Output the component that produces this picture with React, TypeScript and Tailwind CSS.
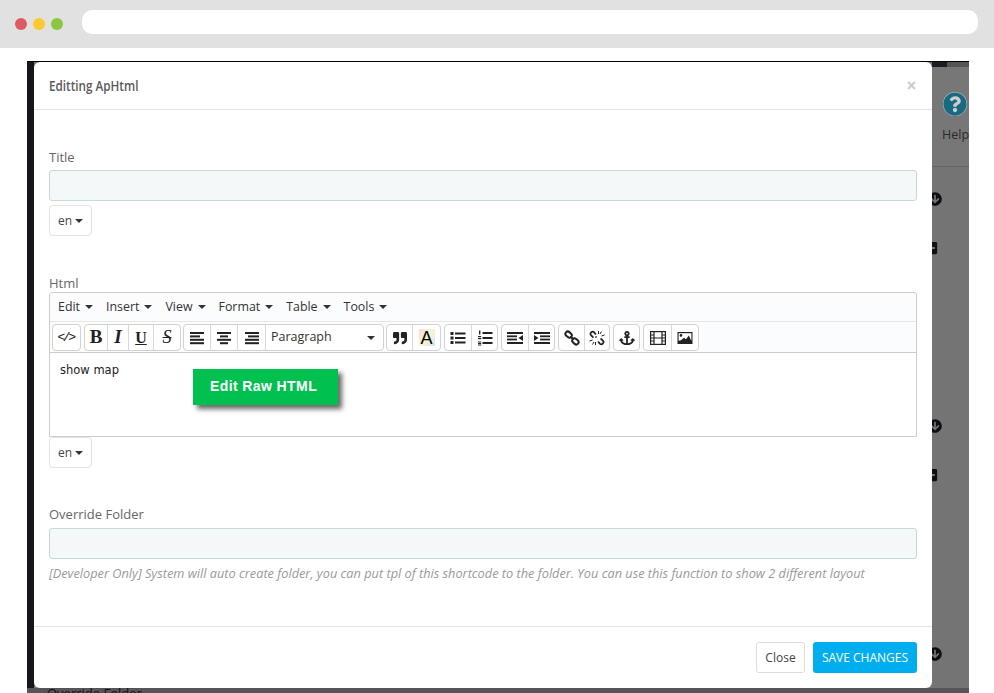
import React from 'react';
import { FaAnchor, FaArrowCircleDown, FaPlusSquare, FaQuoteRight, FaQuestionCircle } from 'react-icons/fa';

const Caret = ({ className = 'border-t-[#333]' }: { className?: string }) => (
  <span className={`inline-block w-0 h-0 border-x-[4px] border-x-transparent border-t-[4px] ${className}`} />
);

const Lines = ({ rows }: { rows: [number, number][] }) => (
  <svg width="16" height="14" viewBox="0 0 16 14" fill="#222">
    {rows.map(([x, w], i) => (
      <rect key={i} x={x} y={1 + i * 3.4} width={w} height="2" />
    ))}
  </svg>
);

const BulletList = () => (
  <svg width="16" height="14" viewBox="0 0 16 14" fill="#222">
    <rect x="0.5" y="1" width="3" height="3" />
    <rect x="0.5" y="5.5" width="3" height="3" />
    <rect x="0.5" y="10" width="3" height="3" />
    <rect x="5" y="1.5" width="10.5" height="2" />
    <rect x="5" y="6" width="10.5" height="2" />
    <rect x="5" y="10.5" width="10.5" height="2" />
  </svg>
);

const NumberList = () => (
  <svg width="16" height="16" viewBox="0 0 16 16" fill="#222">
    <rect x="2" y="0.5" width="1.4" height="4" />
    <rect x="1" y="6" width="3.2" height="1.2" />
    <rect x="1" y="8" width="3.2" height="1.2" />
    <rect x="1" y="11.5" width="3.2" height="1" />
    <rect x="1" y="13" width="3.2" height="1" />
    <rect x="1" y="14.5" width="3.2" height="1" />
    <rect x="5.5" y="2" width="10" height="2" />
    <rect x="5.5" y="7" width="10" height="2" />
    <rect x="5.5" y="12" width="10" height="2" />
  </svg>
);

const Indent = ({ flip }: { flip?: boolean }) => (
  <svg width="16" height="14" viewBox="0 0 16 14" fill="#222" className={flip ? '-scale-x-100' : ''}>
    <rect x="0" y="1" width="16" height="2" />
    <rect x="6" y="4.4" width="10" height="1.8" />
    <rect x="6" y="7.6" width="10" height="1.8" />
    <rect x="0" y="11" width="16" height="2" />
    <path d="M0 4l4.5 3L0 10z" />
  </svg>
);

const LinkIcon = () => (
  <svg width="16" height="16" viewBox="0 0 16 16" fill="none" stroke="#222" strokeWidth="2">
    <rect x="-3.4" y="-2.4" width="6.8" height="4.8" rx="2.4" transform="translate(4.6 4.6) rotate(40)" />
    <rect x="-3.4" y="-2.4" width="6.8" height="4.8" rx="2.4" transform="translate(11.4 11.4) rotate(40)" />
    <path d="M6.5 6.5l3 3" />
  </svg>
);

const UnlinkIcon = () => (
  <svg width="16" height="16" viewBox="0 0 16 16" fill="none" stroke="#222" strokeWidth="1.7">
    <path d="M7 4.5L5.2 2.4a2.1 2.1 0 0 0-3 3l2.2 2.2M9 11.5l1.8 2.1a2.1 2.1 0 0 0 3-3l-2.2-2.2M6.5 6.5l1 1" />
    <path strokeWidth="1" d="M9.5 1v3M12.5 1.5l-1.5 2.5M15.5 5l-3 1M.5 11l3-1M3.5 14.5l1.5-2.5M6.5 15v-3" />
  </svg>
);

const FilmIcon = () => (
  <svg width="16" height="14" viewBox="0 0 16 14" fill="none" stroke="#222" strokeWidth="1.2">
    <rect x="0.6" y="0.6" width="14.8" height="12.8" />
    <path d="M4 .6v12.8M12 .6v12.8M.6 4h3.4M.6 7h3.4M.6 10h3.4M12 4h3.4M12 7h3.4M12 10h3.4M4 7h8" />
  </svg>
);

const ImageIcon = () => (
  <svg width="16" height="14" viewBox="0 0 16 14">
    <rect x="0.5" y="1" width="15" height="12" fill="#222" />
    <rect x="1.6" y="2.2" width="12.8" height="7.4" fill="#fff" />
    <circle cx="4" cy="4.4" r="1.3" fill="#222" />
    <path d="M3 10l4-3.2 2 1.4 2.8-3.6 2.6 5.4z" fill="#222" />
  </svg>
);

// one joined button in a toolbar group, width comes from the reference
const Btn = ({ w, children }: { w: string; children: React.ReactNode }) => (
  <div className={`${w} h-full flex items-center justify-center border-r border-[#d9d9d9] last:border-r-0`}>
    {children}
  </div>
);

const Group = ({ className = '', children }: { className?: string; children: React.ReactNode }) => (
  <div className={`h-[27px] flex border border-[#d2d2d2] rounded-[4px] bg-white ${className}`}>{children}</div>
);

const menus = ['Edit', 'Insert', 'View', 'Format', 'Table', 'Tools'];

const LangButton = () => (
  <div className="w-[43px] h-[31px] border border-[#e2e2e2] rounded-[4px] flex items-center justify-center gap-[3px] text-[12px] text-[#444]">
    en <Caret />
  </div>
);

const TextField = () => (
  <div className="h-[31px] bg-[#f4f8f9] border border-[#c3d9dc] rounded-[3px]" />
);

const Toolbar = () => (
  <div className="h-[31px] flex items-start gap-[3px] pl-[2px] pt-[2px] border-b border-[#ccc] bg-[#fbfcfd]">
    <Group>
      <Btn w="w-[27px]">
        <span className="font-['Liberation_Mono',monospace] text-[13px] tracking-[-2.5px] pr-[2px] text-[#222]">&lt;/&gt;</span>
      </Btn>
    </Group>
    <Group>
      <Btn w="w-[23px]"><span className="font-['Liberation_Serif',serif] text-[19px] font-bold text-[#222]">B</span></Btn>
      <Btn w="w-[21px]"><span className="font-['Liberation_Serif',serif] text-[19px] font-bold italic text-[#222]">I</span></Btn>
      <Btn w="w-[25px]"><span className="font-['Liberation_Serif',serif] text-[16px] font-bold underline text-[#222]">U</span></Btn>
      <Btn w="w-[26px]"><span className="font-['Liberation_Serif',serif] text-[18px] line-through italic text-[#222]">S</span></Btn>
    </Group>
    <Group className="-ml-px">
      <Btn w="w-[27px]"><Lines rows={[[1, 14], [1, 10], [1, 14], [1, 14]]} /></Btn>
      <Btn w="w-[27px]"><Lines rows={[[1, 14], [4, 8], [1, 14], [4, 8]]} /></Btn>
      <Btn w="w-[28px]"><Lines rows={[[1, 14], [4, 11], [1, 14], [1, 14]]} /></Btn>
      <div className="w-[117px] flex items-center justify-between pl-[5px] pr-[8px] text-[12.5px] text-[#333]">
        Paragraph <Caret />
      </div>
    </Group>
    <Group className="-ml-px">
      <Btn w="w-[26px]"><FaQuoteRight className="text-[14px] text-[#222]" /></Btn>
      <Btn w="w-[27px]">
        <span className="w-[16px] h-[17px] flex items-center justify-center bg-[linear-gradient(135deg,#fbd5dc,#fbf6cc_50%,#cfe6fb)] text-[18px] font-['Liberation_Sans',sans-serif] text-black leading-none">A</span>
      </Btn>
    </Group>
    <Group>
      <Btn w="w-[27px]"><BulletList /></Btn>
      <Btn w="w-[25px]"><NumberList /></Btn>
    </Group>
    <Group>
      <Btn w="w-[27px]"><Indent flip /></Btn>
      <Btn w="w-[25px]"><Indent /></Btn>
    </Group>
    <Group>
      <Btn w="w-[26px]"><LinkIcon /></Btn>
      <Btn w="w-[24px]"><UnlinkIcon /></Btn>
    </Group>
    <Group>
      <Btn w="w-[25px]"><FaAnchor className="text-[16px] text-[#222]" /></Btn>
    </Group>
    <Group>
      <Btn w="w-[28px]"><FilmIcon /></Btn>
      <Btn w="w-[26px]"><ImageIcon /></Btn>
    </Group>
  </div>
);

const Editor = () => (
  <div className="relative h-[145px] border border-[#ccc] rounded-t-[3px] flex flex-col">
    <div className="h-[29px] shrink-0 flex items-center pl-[8px] gap-[13px] bg-[#fbfcfd] border-b border-[#e6e6e6] text-[12.4px] text-[#333] rounded-t-[3px]">
      {menus.map((m) => (
        <span key={m} className="flex items-center gap-[5px]">
          {m} <Caret />
        </span>
      ))}
    </div>
    <Toolbar />
    <div className="flex-1 pl-[10px] pt-[9px] text-[11.5px] leading-[16px] text-[#222] font-['DejaVu_Sans',sans-serif]">show map</div>
    <div className="absolute left-[143px] top-[76px] w-[145px] h-[36px] bg-[#00c04f] shadow-[4px_4px_5px_#666] flex items-center pl-[17px] pb-[2px] text-[14px] tracking-[0.4px] font-bold text-white font-['Liberation_Sans',sans-serif]">
      Edit Raw HTML
    </div>
  </div>
);

const Modal = () => (
  <div className="relative z-10 w-[898px] h-[626px] bg-white rounded-[6px] flex flex-col">
    <div className="h-[48px] shrink-0 border-b border-[#e5e5e5] flex items-center justify-between pl-[15px] pr-[16px]">
      <span className="origin-left scale-x-[0.78] whitespace-nowrap text-[15px] font-semibold text-[#5a5a5a]">Editting ApHtml</span>
      <span className="text-[16px] leading-none font-bold text-[#c9c9c9] font-['Liberation_Sans',sans-serif]">×</span>
    </div>
    <div className="flex-1 px-[15px] text-[13px] text-[#666]">
      <div className="mt-[38px] h-[18px] leading-[18px]">Title</div>
      <div className="mt-[4px]"><TextField /></div>
      <div className="mt-[4px]"><LangButton /></div>
      <div className="mt-[38px] h-[18px] leading-[18px]">Html</div>
      <Editor />
      <LangButton />
      <div className="mt-[37px] h-[18px] leading-[18px]">Override Folder</div>
      <div className="mt-[5px]"><TextField /></div>
      <div className="mt-[5px] text-[12.75px] leading-[18px] italic text-[#9a9a9a] whitespace-nowrap">
        [Developer Only] System will auto create folder, you can put tpl of this shortcode to the folder. You can use this function to show 2 different layout
      </div>
    </div>
    <div className="h-[62px] shrink-0 border-t border-[#e5e5e5] flex items-start justify-end gap-[8px] pt-[15px] pr-[15px]">
      <div className="w-[49px] h-[31px] border border-[#ddd] rounded-[3px] flex items-center justify-center text-[12px] text-[#444]">Close</div>
      <div className="w-[104px] h-[31px] bg-[#00aeef] rounded-[3px] flex items-center justify-center text-[12px] text-white">SAVE CHANGES</div>
    </div>
  </div>
);

const Aside = () => (
  <div className="w-[37px] flex flex-col">
    <div className="h-[5px] flex">
      <div className="w-[15px] bg-[#1c1d20]" />
      <div className="flex-1 bg-[#555]" />
    </div>
    <div className="relative mt-[25px] ml-[11px] w-[24px] h-[24px] rounded-full bg-[#ccc]">
      <FaQuestionCircle className="absolute inset-0 text-[24px] text-[#176a80]" />
    </div>
    <div className="mt-[10px] ml-[10px] h-[18px] leading-[18px] text-[12.5px] text-[#2a2a2a]">Help</div>
    <div className="mt-[22px] border-t border-[#666]" />
    <div className="flex-1 bg-[#747474] flex flex-col">
      <FaArrowCircleDown className="mt-[25px] -ml-[4px] text-[14px] text-[#0d0f14]" />
      <FaPlusSquare className="mt-[35px] -ml-[8px] text-[14px] text-[#0d0f14]" />
      <FaArrowCircleDown className="mt-[164px] -ml-[4px] text-[14px] text-[#0d0f14]" />
      <FaPlusSquare className="mt-[35px] -ml-[8px] text-[14px] text-[#0d0f14]" />
      <FaArrowCircleDown className="mt-[165px] -ml-[4px] text-[14px] text-[#0d0f14]" />
    </div>
  </div>
);

export default function App() {
  return (
    <div className="w-[994px] h-[693px] overflow-hidden bg-white font-['Open_Sans',sans-serif]">
      <div className="h-[48px] bg-[#e1e1e1] flex items-center pl-[15px] pr-[16px]">
        <div className="flex gap-[6px]">
          <span className="w-[12px] h-[12px] rounded-full bg-[#dc5a60]" />
          <span className="w-[12px] h-[12px] rounded-full bg-[#fdc92f]" />
          <span className="w-[12px] h-[12px] rounded-full bg-[#8cc540]" />
        </div>
        <div className="ml-[19px] flex-1 h-[24px] -mt-[4px] bg-white rounded-[10px]" />
      </div>
      <div className="mt-[13px] ml-[27px] w-[942px] h-[632px] flex flex-col border-t border-black bg-[#777] overflow-hidden">
        <div className="h-[626px] flex shrink-0">
          <div className="w-[7px] bg-[#16171b]" />
          <Modal />
          <Aside />
        </div>
        <div className="flex-1 bg-[#555] pl-[20px] text-[13px] leading-[10px] text-[#111] overflow-hidden">Override Folder</div>
      </div>
    </div>
  );
}
